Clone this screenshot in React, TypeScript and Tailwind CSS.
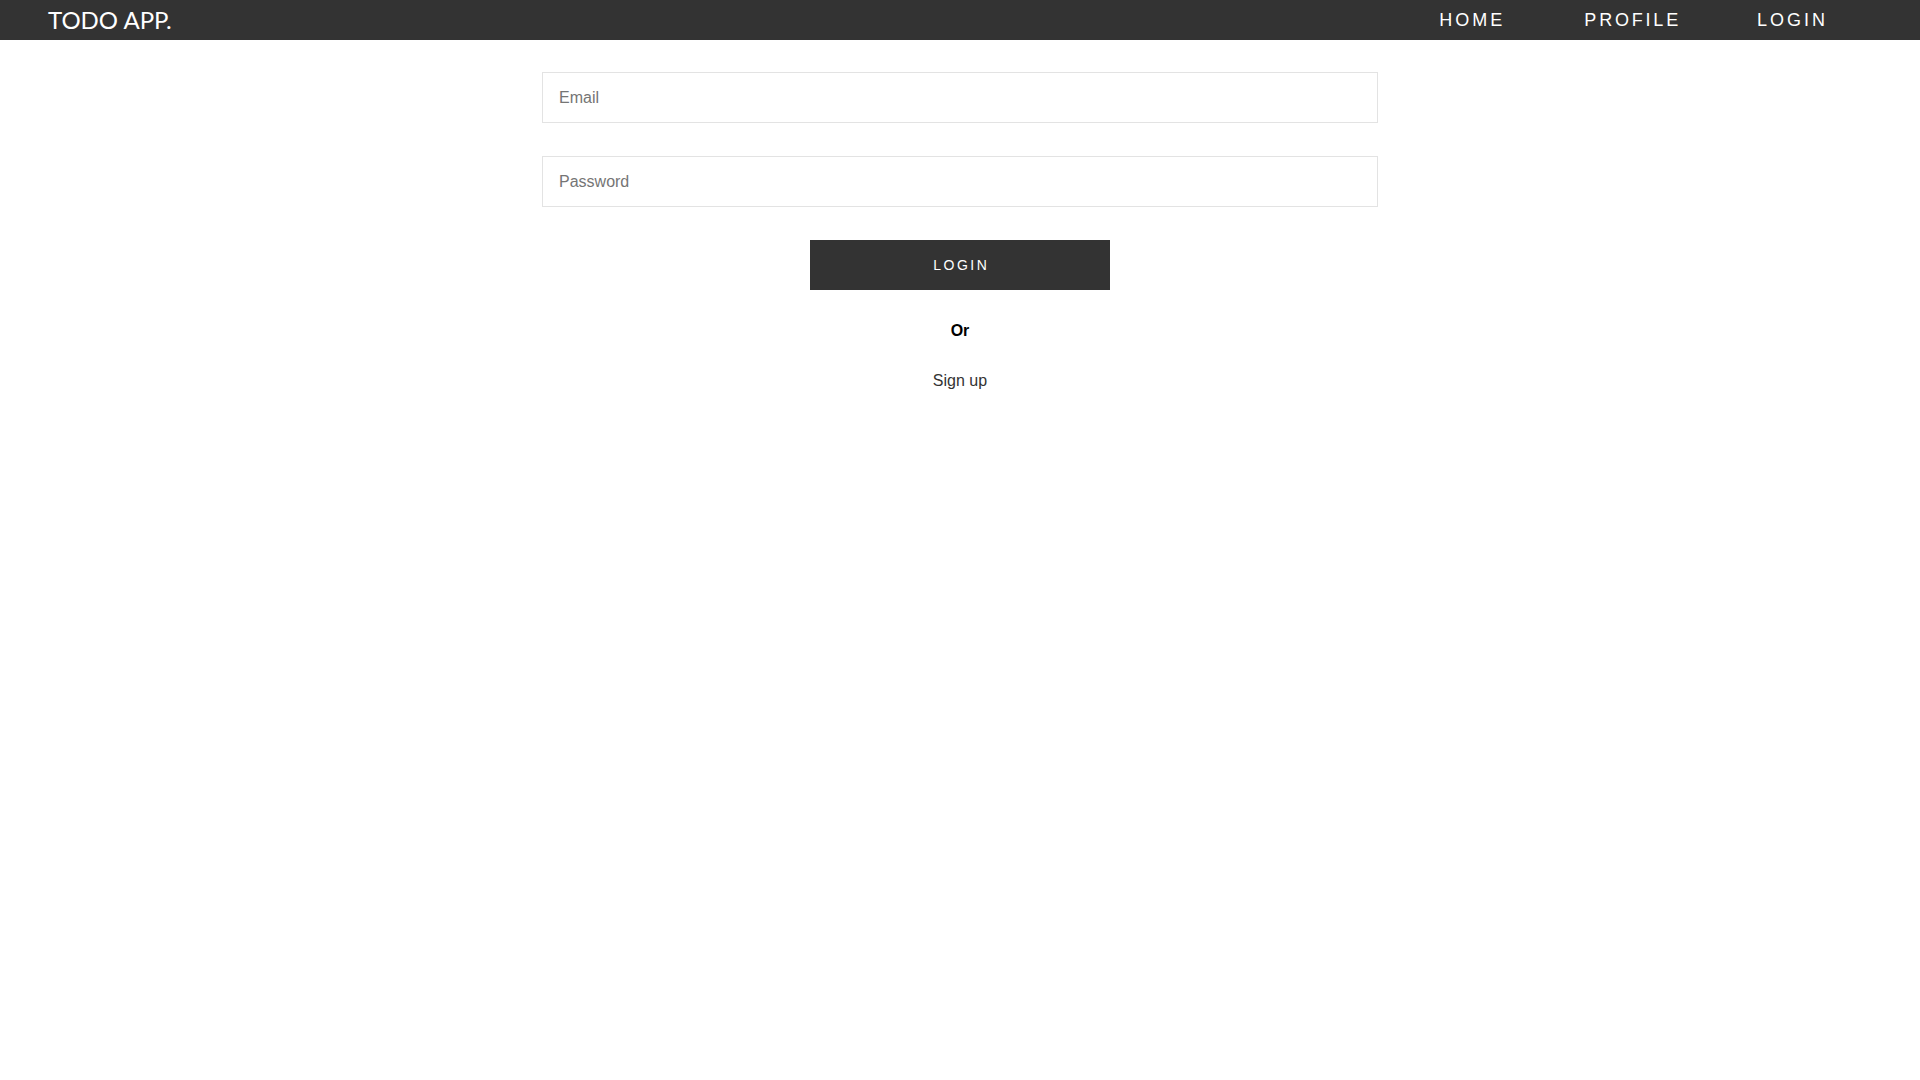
import { useState } from 'react';

export default function App() {
  const [email, setEmail] = useState('');
  const [password, setPassword] = useState('');

  return (
    <div className="min-h-screen bg-white font-['Liberation_Sans',Arial,sans-serif]">
      {/* Bara de navigare */}
      <nav className="h-[40px] bg-[#333333] flex items-center justify-between pl-[48px] pr-[92px]">
        <a href="#" className="text-white text-[24px] font-['Lato',sans-serif] leading-none">
          TODO APP.
        </a>
        <ul className="flex items-center pt-[2px]">
          <li>
            <a href="#" className="text-white text-[18px] tracking-[3px] leading-none">HOME</a>
          </li>
          <li className="ml-[79px]">
            <a href="#" className="text-white text-[18px] tracking-[2.8px] leading-none">PROFILE</a>
          </li>
          <li className="ml-[76px]">
            <a href="#" className="text-white text-[18px] tracking-[3px] leading-none">LOGIN</a>
          </li>
        </ul>
      </nav>

      {/* Formular de autentificare */}
      <form
        className="w-[836px] mx-auto pt-[32px] flex flex-col items-center"
        onSubmit={(e) => e.preventDefault()}
      >
        <input
          type="email"
          value={email}
          onChange={(e) => setEmail(e.target.value)}
          placeholder="Email"
          className="w-full h-[51px] border border-[#e3e3e3] px-4 text-[16px] text-[#333] placeholder:text-[#757575] outline-none"
        />
        <input
          type="password"
          value={password}
          onChange={(e) => setPassword(e.target.value)}
          placeholder="Password"
          className="w-full h-[51px] mt-[33px] border border-[#e3e3e3] px-4 text-[16px] text-[#333] placeholder:text-[#757575] outline-none"
        />
        <button
          type="submit"
          className="mt-[33px] w-[300px] h-[50px] bg-[#333333] text-white text-[14px] tracking-[2.5px] pl-[2.5px]"
        >
          LOGIN
        </button>
        <p className="mt-[29px] text-[16px] leading-6 font-bold text-black">Or</p>
        <a href="#" className="mt-[26px] text-[16px] leading-6 text-[#333]">
          Sign up
        </a>
      </form>
    </div>
  );
}
